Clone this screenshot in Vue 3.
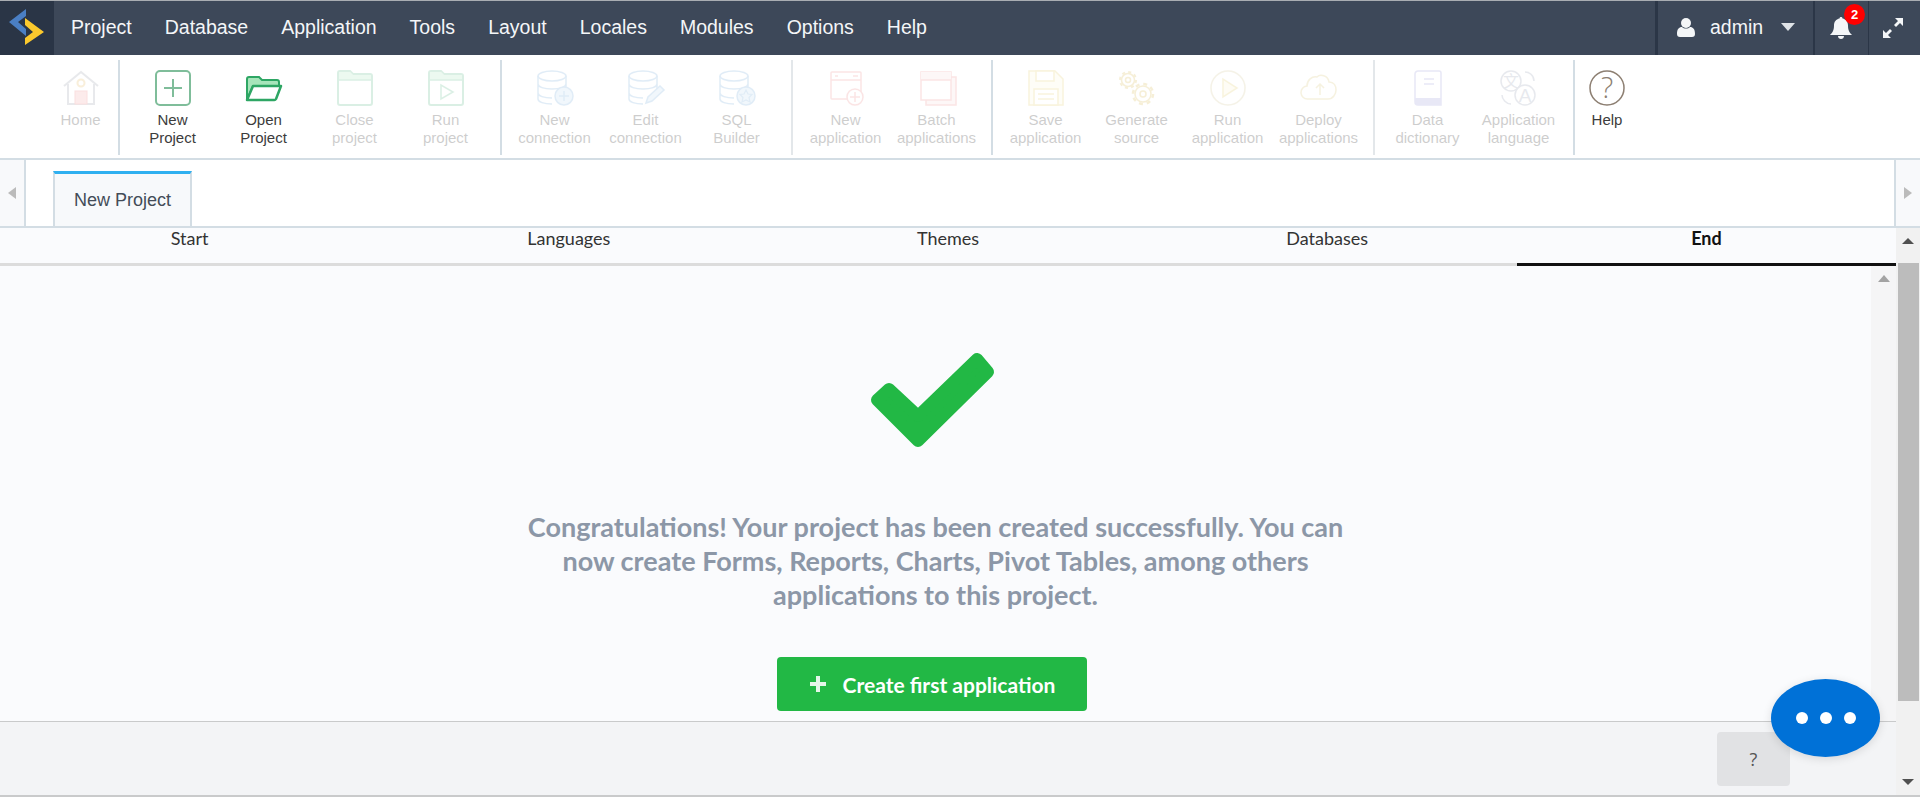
<template>
  <div class="app">
    <header class="nav">
      <div class="logo">
        <svg width="54" height="54" viewBox="0 0 54 54">
          <polygon points="9,22 26,9 26,16 18,22 26,29 26,36" fill="#4a7fc4" />
          <polygon points="25,18 44,32 25,45 25,38 33,32 25,25" fill="#fbc92d" />
        </svg>
      </div>
      <nav class="menu">
        <a v-for="m in menu" :key="m" class="menu-item">{{ m }}</a>
      </nav>
      <div class="nav-right">
        <div class="nav-cell user">
          <svg width="18" height="19" viewBox="0 0 18 19" fill="#f4f6f8">
            <circle cx="9" cy="5" r="5" />
            <path d="M0 16c0-5 2-7 5-7 1 1 2.500 1.500 4 1.500s3-.5 4-1.500c3 0 5 2 5 7 0 2-1 3-3 3H3c-2 0-3-1-3-3z" />
          </svg>
          <span>admin</span>
          <i class="caret"></i>
        </div>
        <div class="nav-cell bell">
          <svg width="22" height="22" viewBox="0 0 22 22" fill="#f4f6f8">
            <path d="M11 0c1 0 1.500.7 1.500 1.600C16 2.300 18 5 18 8.500c0 5 1.500 7 4 9.500H0c2.500-2.500 4-4.500 4-9.500 0-3.500 2-6.200 5.500-6.900C9.500.7 10 0 11 0z" />
            <path d="M8 19h6c0 1.700-1.300 3-3 3s-3-1.300-3-3z" />
          </svg>
          <b class="badge">2</b>
        </div>
        <div class="nav-cell expand">
          <svg width="20" height="20" viewBox="0 0 20 20" fill="#f4f6f8">
            <polygon points="12,0 20,0 20,8 17,5 13,9 11,7 15,3" />
            <polygon points="0,20 0,12 3,15 7,11 9,13 5,17 8,20" />
          </svg>
        </div>
      </div>
    </header>

    <section class="toolbar">
      <div v-for="(group, g) in groups" :key="g" class="tool-group" :class="group.cls">
        <div v-for="item in group.items" :key="item.icon" class="tool" :class="{ dim: item.dim }">
          <svg class="tool-icon" width="40" height="36" viewBox="0 0 40 36" fill="none" v-html="icons[item.icon]"></svg>
          <span>{{ item.l1 }}</span>
          <span>{{ item.l2 }}</span>
        </div>
      </div>
    </section>

    <section class="tabs">
      <div class="tab-arrow left"><i></i></div>
      <div class="tab-strip">
        <div class="tab">New Project</div>
      </div>
      <div class="tab-arrow right"><i></i></div>
    </section>

    <section class="main">
      <div class="main-left">
        <div class="steps">
          <div v-for="s in steps" :key="s" class="step" :class="{ active: s === 'End' }">{{ s }}</div>
        </div>
        <div class="body">
          <div class="content">
            <svg class="check" width="135" height="106" viewBox="868 347 135 106">
              <polygon
                points="889,389 877,400 918,441 988,372 977,359 918,416"
                fill="#22b845"
                stroke="#22b845"
                stroke-width="12"
                stroke-linejoin="round"
              />
            </svg>
            <p class="congrats">
              Congratulations! Your project has been created successfully. You can now create Forms, Reports, Charts, Pivot Tables, among others applications to this project.
            </p>
            <button type="button" class="create">
              <svg width="18" height="18" viewBox="0 0 18 18" fill="#e4f6e9">
                <path d="M7 1h4v6h6v4h-6v6H7v-6H1V7h6z" />
              </svg>
              Create first application
            </button>
          </div>
          <div class="inner-scroll">
            <i class="up"></i>
          </div>
        </div>
        <div class="footer">
          <button type="button" class="help-btn">?</button>
        </div>
      </div>
      <div class="outer-scroll">
        <i class="up"></i>
        <div class="thumb"></div>
        <i class="down"></i>
      </div>
    </section>

    <div class="chat">
      <i></i><i></i><i></i>
    </div>
  </div>
</template>

<script setup>
const menu = ["Project", "Database", "Application", "Tools", "Layout", "Locales", "Modules", "Options", "Help"];
const steps = ["Start", "Languages", "Themes", "Databases", "End"];

const folder = (s, f) =>
  `<path d="M5 35h30a2 2 0 0 0 2-2V6a2 2 0 0 0-2-2H18l-3-3H5a2 2 0 0 0-2 2v30a2 2 0 0 0 2 2z" stroke="${s}" stroke-width="2"/><path d="M4 2h11l3 3h18v5H4z" fill="${f}"/><path d="M3 10h34" stroke="${s}" stroke-width="1.500"/>`;

const db = (s) =>
  `<ellipse cx="17" cy="6" rx="14" ry="5" stroke="${s}" stroke-width="1.500"/><path d="M3 6v23c0 3 6 5 14 5M31 6v13M3 14c0 3 6 5 14 5s14-2 14-5M3 23c0 3 6 5 14 5" stroke="${s}" stroke-width="1.500"/>`;

const win = (s) =>
  `<rect x="5" y="2" width="30" height="27" stroke="${s}" stroke-width="1.500" rx="1"/><path d="M5 10h30" stroke="${s}" stroke-width="1.500"/><path d="M9 6h3M27 6h5" stroke="${s}" stroke-width="1.500"/>`;

const icons = {
  home: `<path d="M3 16 20 2l17 14" stroke="#8f96a3" stroke-width="2"/><path d="M7 14v20h26V14" stroke="#8f96a3" stroke-width="2"/><circle cx="20" cy="13" r="3.500" stroke="#e5b14a" stroke-width="2"/><rect x="14" y="21" width="12" height="13" fill="#f5a0a0" stroke="#e66" stroke-width="1"/>`,
  newProject: `<rect x="3" y="1" width="34" height="34" rx="4" stroke="#7fbd9a" stroke-width="2"/><path d="M20 9v18M11 18h18" stroke="#7fbd9a" stroke-width="2"/>`,
  openProject: `<path d="M3 30V9a2 2 0 0 1 2-2h10l3 3h15a2 2 0 0 1 2 2v4H9z" fill="#a7e5ba" stroke="#2ea664" stroke-width="2"/><path d="M3 30 9 16h28l-5 13a2 2 0 0 1-2 1z" fill="#fff" stroke="#2ea664" stroke-width="2.500" stroke-linejoin="round"/>`,
  closeProject: folder("#4eb57f", "#a7e5ba"),
  runProject: folder("#4eb57f", "#a7e5ba") + `<path d="M15 15v14l12-7z" stroke="#4eb57f" stroke-width="1.500"/>`,
  newConn: db("#6ba6d9") + `<circle cx="29" cy="26" r="9" fill="#bcdcf3" stroke="#6ba6d9" stroke-width="1.500"/><path d="M29 21v10M24 26h10" stroke="#6ba6d9" stroke-width="1.500"/>`,
  editConn: db("#6ba6d9") + `<path d="M20 33l2-6 12-11 4 4-12 11z" fill="#bcdcf3" stroke="#6ba6d9" stroke-width="1.500"/>`,
  sql: db("#6ba6d9") + `<circle cx="29" cy="26" r="9" fill="#bcdcf3" stroke="#6ba6d9" stroke-width="1.500"/><path d="M29 20l2 4 4 .5-3 3 1 4.500-4-2-4 2 1-4.500-3-3 4-.5z" stroke="#6ba6d9" stroke-width="1.200"/>`,
  newApp: win("#ee7f7f") + `<circle cx="29" cy="27" r="8" fill="#fff" stroke="#ee7f7f" stroke-width="1.500"/><path d="M29 22v10M24 27h10" stroke="#ee7f7f" stroke-width="1.500"/>`,
  batch: `<rect x="9" y="7" width="30" height="28" fill="#fbdada" stroke="#ee7f7f" stroke-width="1.500"/><rect x="4" y="2" width="30" height="28" fill="#fff" stroke="#ee7f7f" stroke-width="1.500"/><rect x="4" y="2" width="30" height="8" fill="#fbdada"/><path d="M4 10h30" stroke="#ee7f7f" stroke-width="1.500"/>`,
  save: `<path d="M3 1h26l8 8v26H3z" fill="#fdf7dc" stroke="#e2c95a" stroke-width="1.500"/><rect x="10" y="1" width="18" height="10" fill="#fff" stroke="#e2c95a" stroke-width="1.500"/><rect x="8" y="19" width="24" height="16" fill="#fff" stroke="#e2c95a" stroke-width="1.500"/><path d="M12 24h16M12 29h16" stroke="#e2c95a" stroke-width="1.500"/>`,
  gears: `<circle cx="11" cy="10" r="6.500" stroke="#d6b23c" stroke-width="1.500"/><circle cx="11" cy="10" r="8" stroke="#d6b23c" stroke-width="2" stroke-dasharray="3 3.280"/><circle cx="11" cy="10" r="2.500" stroke="#d6b23c" stroke-width="1.500"/><circle cx="26" cy="24" r="8" stroke="#d6b23c" stroke-width="1.500"/><circle cx="26" cy="24" r="10" stroke="#d6b23c" stroke-width="2.500" stroke-dasharray="3.900 3.950"/><circle cx="26" cy="24" r="3" stroke="#d6b23c" stroke-width="1.500"/>`,
  runApp: `<circle cx="20" cy="18" r="17" stroke="#cfc28a" stroke-width="1.500"/><path d="M15 9v18l14-9z" fill="#fdf5cf" stroke="#e2c95a" stroke-width="1.500"/>`,
  deploy: `<path d="M9 29a6.500 6.500 0 0 1-1-13c0-6 5-10 10-9 3-3 11-2 12 5 5 0 7 4 7 8s-3 9-8 9z" stroke="#d6c067" stroke-width="1.500"/><path d="M21 25V14M17 18l4-4 4 4" stroke="#d6c067" stroke-width="1.500"/>`,
  book: `<path d="M7 32V4a3 3 0 0 1 3-3h21a2 2 0 0 1 2 2v32H10a3 3 0 0 1-3-3z" stroke="#8f8fd6" stroke-width="1.500"/><path d="M7 28h26v7H10a3 3 0 0 1-3-3z" fill="#8f8fd6"/><path d="M16 9h10M16 14h10" stroke="#8f8fd6" stroke-width="1.500"/>`,
  lang: `<circle cx="12" cy="11" r="10" stroke="#8d97ad" stroke-width="1.500"/><circle cx="26" cy="25" r="10" fill="#fff" stroke="#8d97ad" stroke-width="1.500"/><text x="12" y="17" text-anchor="middle" font-size="16" font-family="Noto Sans CJK SC, sans-serif" fill="#8d97ad">文</text><text x="26" y="32" text-anchor="middle" font-size="19" font-family="Liberation Sans, sans-serif" fill="#8d97ad">A</text><path d="M26 2c4 0 9 3 9 9M3 25c0 4 4 9 9 9" stroke="#8d97ad" stroke-width="1.500"/>`,
  help: `<circle cx="20" cy="18" r="17" stroke="#8d7f72" stroke-width="1.500"/><text x="20" y="28" text-anchor="middle" font-size="29" font-family="Open Sans, sans-serif" font-weight="300" fill="#8d7f72">?</text>`,
};

const groups = [
  { cls: "first", items: [{ icon: "home", l1: "Home", l2: "", dim: true }] },
  {
    items: [
      { icon: "newProject", l1: "New", l2: "Project" },
      { icon: "openProject", l1: "Open", l2: "Project" },
      { icon: "closeProject", l1: "Close", l2: "project", dim: true },
      { icon: "runProject", l1: "Run", l2: "project", dim: true },
    ],
  },
  {
    cls: "thin",
    items: [
      { icon: "newConn", l1: "New", l2: "connection", dim: true },
      { icon: "editConn", l1: "Edit", l2: "connection", dim: true },
      { icon: "sql", l1: "SQL", l2: "Builder", dim: true },
    ],
  },
  {
    items: [
      { icon: "newApp", l1: "New", l2: "application", dim: true },
      { icon: "batch", l1: "Batch", l2: "applications", dim: true },
    ],
  },
  {
    cls: "thin",
    items: [
      { icon: "save", l1: "Save", l2: "application", dim: true },
      { icon: "gears", l1: "Generate", l2: "source", dim: true },
      { icon: "runApp", l1: "Run", l2: "application", dim: true },
      { icon: "deploy", l1: "Deploy", l2: "applications", dim: true },
    ],
  },
  {
    items: [
      { icon: "book", l1: "Data", l2: "dictionary", dim: true },
      { icon: "lang", l1: "Application", l2: "language", dim: true },
    ],
  },
  { cls: "last", items: [{ icon: "help", l1: "Help", l2: "" }] },
];
</script>

<style>
html,
body {
  overflow: hidden;
  background: #fff;
}
</style>

<style scoped>
.app {
  position: relative;
  width: 1920px;
  height: 800px;
  overflow: hidden;
  font-family: "Liberation Sans", Arial, sans-serif;
  background: #fff;
}

.nav {
  display: flex;
  height: 55px;
  box-sizing: border-box;
  border-top: 1px solid #a9adb2;
  background: #3d4859;
  color: #f4f6f8;
}

.logo {
  width: 54px;
  height: 54px;
  background: #2a3546;
}

.logo svg {
  display: block;
  margin-top: -1px;
}

.menu {
  display: flex;
  align-items: center;
  gap: 33px;
  padding: 0 0 2px 17px;
  font-size: 19.500px;
}

.nav-right {
  display: flex;
  margin-left: auto;
}

.nav-cell {
  position: relative;
  display: flex;
  align-items: center;
  box-sizing: border-box;
  height: 54px;
}

.user {
  width: 158px;
  padding: 0 0 2px 19px;
  border-left: 3px solid #2b3647;
  font-size: 19.500px;
}

.user span {
  margin-left: 15px;
}

.caret {
  width: 0;
  height: 0;
  margin-left: 18px;
  border-left: 7px solid transparent;
  border-right: 7px solid transparent;
  border-top: 8px solid #dfe3e7;
}

.bell {
  width: 55px;
  padding-left: 15px;
  border-left: 2px solid #2b3647;
}

.badge {
  position: absolute;
  left: 29px;
  top: 3px;
  width: 21px;
  height: 21px;
  border-radius: 50%;
  background: #f00;
  color: #fff;
  font-size: 13px;
  line-height: 21px;
  text-align: center;
}

.expand {
  width: 52px;
  padding-left: 14px;
  border-left: 1px solid #2b3647;
}

.toolbar {
  display: flex;
  height: 105px;
  box-sizing: border-box;
  border-bottom: 2px solid #d3dde4;
}

.tool-group {
  display: flex;
  height: 95px;
  margin-top: 5px;
  padding: 0 9px 0 7px;
  border-right: 2px solid #d3dde4;
}

.tool-group.thin {
  border-right-color: #e3e7ea;
}

.tool-group.first {
  box-sizing: border-box;
  width: 120px;
  padding: 0 0 0 43px;
}

.tool-group.last {
  border-right: 0;
  padding: 0;
}

.tool {
  display: flex;
  flex-direction: column;
  align-items: center;
  width: 91px;
  font-size: 15px;
  line-height: 18px;
  color: #3c3c3c;
}

.first .tool {
  width: 76px;
}

.last .tool {
  width: 64px;
}

.tool.dim {
  opacity: 0.25;
}

.tool.dim .tool-icon {
  opacity: 0.8;
}

.tool-icon {
  margin: 10px 0 5px;
  overflow: visible;
}

.tabs {
  display: flex;
  height: 68px;
  box-sizing: border-box;
  border-bottom: 2px solid #d3dde4;
}

.tab-arrow {
  display: flex;
  align-items: center;
  justify-content: center;
  width: 24px;
  background: #f8f9fb;
}

.tab-arrow.left {
  border-right: 2px solid #d3dde4;
}

.tab-arrow.right {
  border-left: 2px solid #d3dde4;
}

.tab-arrow i {
  width: 0;
  height: 0;
  border-top: 6px solid transparent;
  border-bottom: 6px solid transparent;
}

.left i {
  border-right: 8px solid #bbb;
}

.right i {
  border-left: 8px solid #bbb;
}

.tab-strip {
  flex: 1;
  padding: 11px 0 0 27px;
}

.tab {
  box-sizing: border-box;
  width: 139px;
  height: 55px;
  border-top: 3px solid #2fb0f0;
  border-left: 2px solid #d3dde4;
  border-right: 2px solid #d3dde4;
  background: #f7f9fb;
  color: #434c58;
  font-size: 18px;
  line-height: 52px;
  text-align: center;
}

.main {
  display: flex;
  height: 569px;
  box-sizing: border-box;
  border-bottom: 2px solid #c9cacb;
}

.main-left {
  display: flex;
  flex-direction: column;
  flex: 1;
  min-width: 0;
}

.steps {
  display: flex;
  height: 38px;
  background: #fafbfd;
  font-family: Lato, sans-serif;
  font-size: 18px;
  color: #333;
}

.step {
  flex: 1;
  box-sizing: border-box;
  border-bottom: 3px solid #dcdcdc;
  line-height: 20px;
  text-align: center;
}

.step.active {
  border-bottom-color: #111;
  color: #111;
  font-weight: 700;
}

.body {
  display: flex;
  height: 455px;
}

.content {
  display: flex;
  flex-direction: column;
  align-items: center;
  flex: 1;
  padding-top: 81px;
  background: #fafbfd;
  font-family: Lato, sans-serif;
}

.check {
  display: block;
  flex-shrink: 0;
}

.congrats {
  width: 830px;
  margin: 57px 0 0;
  color: #8c97a7;
  font-size: 27px;
  font-weight: 700;
  line-height: 34px;
  text-align: center;
}

.create {
  display: flex;
  align-items: center;
  justify-content: center;
  gap: 16px;
  width: 310px;
  height: 54px;
  margin: 45px 7px 0 0;
  padding: 0;
  border: 0;
  border-radius: 4px;
  background: #22b845;
  color: #fff;
  font-family: inherit;
  font-size: 21px;
  font-weight: 700;
}

.inner-scroll {
  width: 25px;
  background: #f5f5f6;
}

.inner-scroll .up,
.outer-scroll .up {
  display: block;
  width: 0;
  height: 0;
  margin: 0 auto;
  border-left: 6px solid transparent;
  border-right: 6px solid transparent;
}

.inner-scroll .up {
  margin-top: 9px;
  border-bottom: 7px solid #a3a3a3;
}

.footer {
  display: flex;
  justify-content: flex-end;
  box-sizing: border-box;
  height: 74px;
  padding: 10px 106px 0 0;
  border-top: 1px solid #c9cacb;
  background: #f3f4f6;
}

.help-btn {
  width: 73px;
  height: 54px;
  padding: 0;
  border: 0;
  border-radius: 4px;
  background: #e1e2e4;
  color: #555;
  font-family: "Open Sans", sans-serif;
  font-size: 18px;
}

.outer-scroll {
  display: flex;
  flex-direction: column;
  align-items: center;
  width: 24px;
  background: #f1f1f1;
}

.outer-scroll .up {
  margin-top: 10px;
  border-bottom: 6px solid #505050;
}

.thumb {
  width: 21px;
  height: 438px;
  margin-top: 19px;
  background: #bcbcbc;
}

.down {
  display: block;
  width: 0;
  height: 0;
  margin-top: 78px;
  border-left: 6px solid transparent;
  border-right: 6px solid transparent;
  border-top: 6px solid #505050;
}

.chat {
  position: absolute;
  left: 1771px;
  top: 679px;
  display: flex;
  align-items: center;
  justify-content: center;
  gap: 12px;
  width: 109px;
  height: 78px;
  border-radius: 50%;
  background: #0071d7;
  box-shadow: 0 2px 10px rgba(0, 0, 0, 0.12);
}

.chat i {
  width: 12px;
  height: 12px;
  border-radius: 50%;
  background: #fff;
}
</style>
